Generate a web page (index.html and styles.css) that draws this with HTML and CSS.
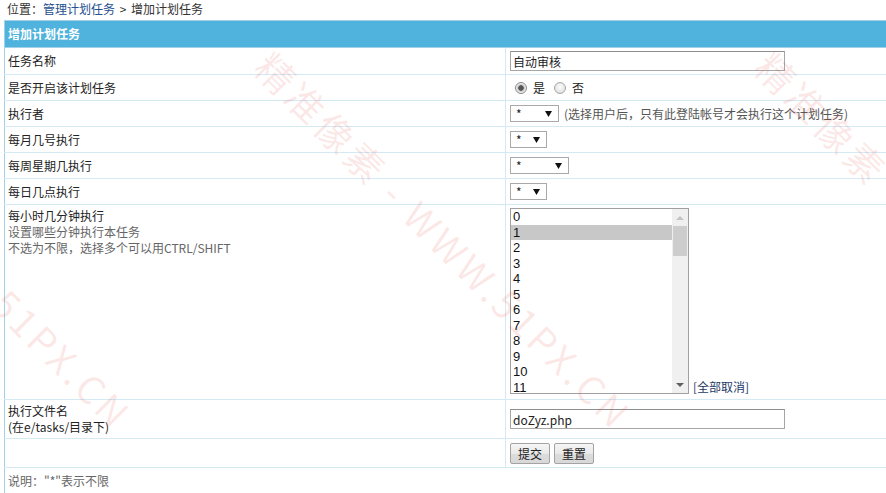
FILE: index.html
```html
<!DOCTYPE html>
<html lang="zh-CN">
<head>
<meta charset="utf-8">
<title>增加计划任务</title>
<link rel="stylesheet" href="styles.css">
</head>
<body>
<div class="crumb">位置：<a class="link" href="#">管理计划任务</a> &gt; 增加计划任务</div>
<table class="form">
  <colgroup><col class="c-lab"><col class="c-val"></colgroup>
  <tr class="head"><td colspan="2">增加计划任务</td></tr>
  <tr class="r27"><td class="lab">任务名称</td><td class="val"><input class="txt" type="text" value="自动审核"></td></tr>
  <tr><td class="lab">是否开启该计划任务</td><td class="val"><div class="radios"><label class="opt"><input class="rad" type="radio" name="open" checked><span>是</span></label><label class="opt"><input class="rad" type="radio" name="open"><span>否</span></label></div></td></tr>
  <tr><td class="lab">执行者</td><td class="val"><div class="inline"><select class="sel w49"><option>*</option></select><span class="note">(选择用户后，只有此登陆帐号才会执行这个计划任务)</span></div></td></tr>
  <tr><td class="lab">每月几号执行</td><td class="val"><div class="inline"><select class="sel w37"><option>*</option></select></div></td></tr>
  <tr><td class="lab">每周星期几执行</td><td class="val"><div class="inline"><select class="sel w59"><option>*</option></select></div></td></tr>
  <tr><td class="lab">每日几点执行</td><td class="val"><div class="inline"><select class="sel w37"><option>*</option></select></div></td></tr>
  <tr class="r-list">
    <td class="lab top">每小时几分钟执行<br><span class="sub">设置哪些分钟执行本任务<br>不选为不限，选择多个可以用CTRL/SHIFT</span></td>
    <td class="val top">
      <div class="lb-row">
        <div class="listbox">
          <ul class="lb-items">
            <li>0</li><li class="on">1</li><li>2</li><li>3</li><li>4</li><li>5</li><li>6</li><li>7</li><li>8</li><li>9</li><li>10</li><li>11</li>
          </ul>
          <div class="lb-bar"><span class="arr up"></span><span class="thumb"></span><span class="arr down"></span></div>
        </div>
        <a class="link-dark" href="#">[全部取消]</a>
      </div>
    </td>
  </tr>
  <tr class="r-file"><td class="lab">执行文件名<br>(在e/tasks/目录下)</td><td class="val"><input class="txt" type="text" value="doZyz.php"></td></tr>
  <tr class="r-btn"><td class="lab"></td><td class="val"><div class="btns"><button class="btn" type="button">提交</button><button class="btn" type="button">重置</button></div></td></tr>
  <tr><td class="foot" colspan="2">说明："*"表示不限</td></tr>
</table>
<div class="wm wm1">精准像素 - WWW.51PX.CN</div>
<div class="wm wm2">精准像素 - WWW.51PX.CN</div>
<div class="wm wm3">精准像素 - WWW.51PX.CN</div>
</body>
</html>
```
FILE: styles.css
```css
html, body {
  margin: 0;
  padding: 0;
  overflow: hidden;
  background: #fff;
}
body {
  font: 12px/16px "Noto Sans CJK SC", "Microsoft YaHei", sans-serif;
  color: #222;
  position: relative;
  min-height: 493px;
}
.crumb {
  height: 20px;
  line-height: 18px;
  padding-left: 7px;
  color: #333;
  word-spacing: 2px;
}
.link {
  color: #24508f;
  text-decoration: none;
}
.form {
  border-collapse: collapse;
  table-layout: fixed;
  margin-left: 4px;
  width: 1000px;
  border: 1px solid #a3d1e8;
}
.c-lab { width: 501px; }
.form td {
  border-bottom: 1px solid #d3eaf5;
  padding: 0 3px;
  height: 25px;
  vertical-align: middle;
  white-space: nowrap;
}
.form td.val {
  border-left: 1px solid #d3eaf5;
  padding-left: 4px;
}
.head td {
  background: #4fb3dd;
  color: #fff;
  font-weight: bold;
  height: 26px;
  border-bottom: 1px solid #a3d1e8;
}
.r27 td { height: 26px; }
.r-list td { height: 191px; padding-top: 3px; }
.r-file td { height: 38px; }
.r-btn td { height: 28px; }
.form td.top { vertical-align: top; }
.sub { color: #666; }
.foot { color: #666; }

.txt {
  box-sizing: border-box;
  width: 275px;
  height: 20px;
  margin: 0;
  padding: 0 2px;
  border: 1px solid #a6a6a6;
  border-top-color: #8e8e8e;
  font: 12px "Noto Sans CJK SC", sans-serif;
  color: #222;
  display: block;
}

.radios {
  display: flex;
  align-items: center;
  padding-left: 5px;
}
.opt {
  display: inline-flex;
  align-items: center;
  gap: 6px;
  margin-right: 9px;
}
.rad {
  appearance: none;
  -webkit-appearance: none;
  width: 12px;
  height: 12px;
  margin: 0;
  border-radius: 50%;
  border: 1px solid #a8a8a8;
  background: radial-gradient(circle at 50% 40%, #fdfdfd 0, #e2e2e2 70%, #d4d4d4 100%);
}
.rad:checked {
  border-color: #8a8a8a;
  background: radial-gradient(circle, #555 0, #555 2.4px, #bdbdbd 3px, #efefef 4.5px, #e0e0e0 100%);
}

.inline {
  display: flex;
  align-items: center;
  gap: 5px;
}
.sel {
  appearance: none;
  -webkit-appearance: none;
  box-sizing: border-box;
  height: 17px;
  margin: 0;
  padding: 0 0 0 5px;
  border: 1px solid #a9a9a9;
  border-radius: 0;
  font: 12px/15px "Noto Sans CJK SC", sans-serif;
  color: #222;
  background: #fff url("data:image/svg+xml;utf8,<svg xmlns='http://www.w3.org/2000/svg' width='7' height='6'><path d='M0 0H7L3.5 6Z' fill='%23111'/></svg>") no-repeat right 6px center;
}
.w49 { width: 49px; }
.w37 { width: 37px; }
.w59 { width: 59px; }
.note { color: #555; }

.lb-row {
  display: flex;
  align-items: flex-end;
  gap: 4px;
}
.listbox {
  box-sizing: border-box;
  width: 179px;
  height: 186px;
  border: 1px solid #a0a0a0;
  display: flex;
  background: #fff;
}
.lb-items {
  flex: 1;
  list-style: none;
  margin: 0;
  padding: 0;
  overflow: hidden;
  font: 13px/15.5px "Liberation Sans", Arial, sans-serif;
  color: #111;
}
.lb-items li { padding-left: 2px; height: 15.5px; }
.lb-items li.on { background: #c8c8c8; }
.lb-bar {
  width: 16px;
  background: #f0f0f0;
  display: flex;
  flex-direction: column;
  align-items: center;
}
.arr {
  height: 17px;
  width: 16px;
  display: flex;
  align-items: center;
  justify-content: center;
}
.arr::before {
  content: "";
  width: 0;
  height: 0;
  border-left: 4px solid transparent;
  border-right: 4px solid transparent;
}
.arr.up::before { border-bottom: 4px solid #c3c3c3; }
.arr.down { margin-top: auto; }
.arr.down::before { border-top: 4px solid #606060; }
.thumb {
  width: 14px;
  height: 30px;
  background: #cdcdcd;
}
.link-dark {
  color: #1d3a66;
  text-decoration: none;
  line-height: 14px;
}

.btns {
  display: flex;
  gap: 4px;
}
.btn {
  box-sizing: border-box;
  width: 40px;
  height: 21px;
  margin: 0;
  padding: 0;
  border: 1px solid #a3a3a3;
  border-radius: 2px;
  background: linear-gradient(#f6f6f6, #e9e9e9 50%, #dcdcdc 51%, #d8d8d8);
  font: 12px/19px "Noto Sans CJK SC", sans-serif;
  color: #222;
}

.wm {
  position: absolute;
  top: 39px;
  font: 38px/40px "Noto Sans CJK SC", sans-serif;
  letter-spacing: 4px;
  color: rgba(232, 70, 70, 0.12);
  white-space: nowrap;
  transform-origin: 0 50%;
  transform: rotate(45deg);
  pointer-events: none;
}
.wm1 { left: -237px; }
.wm2 { left: 263px; }
.wm3 { left: 763px; }
```
